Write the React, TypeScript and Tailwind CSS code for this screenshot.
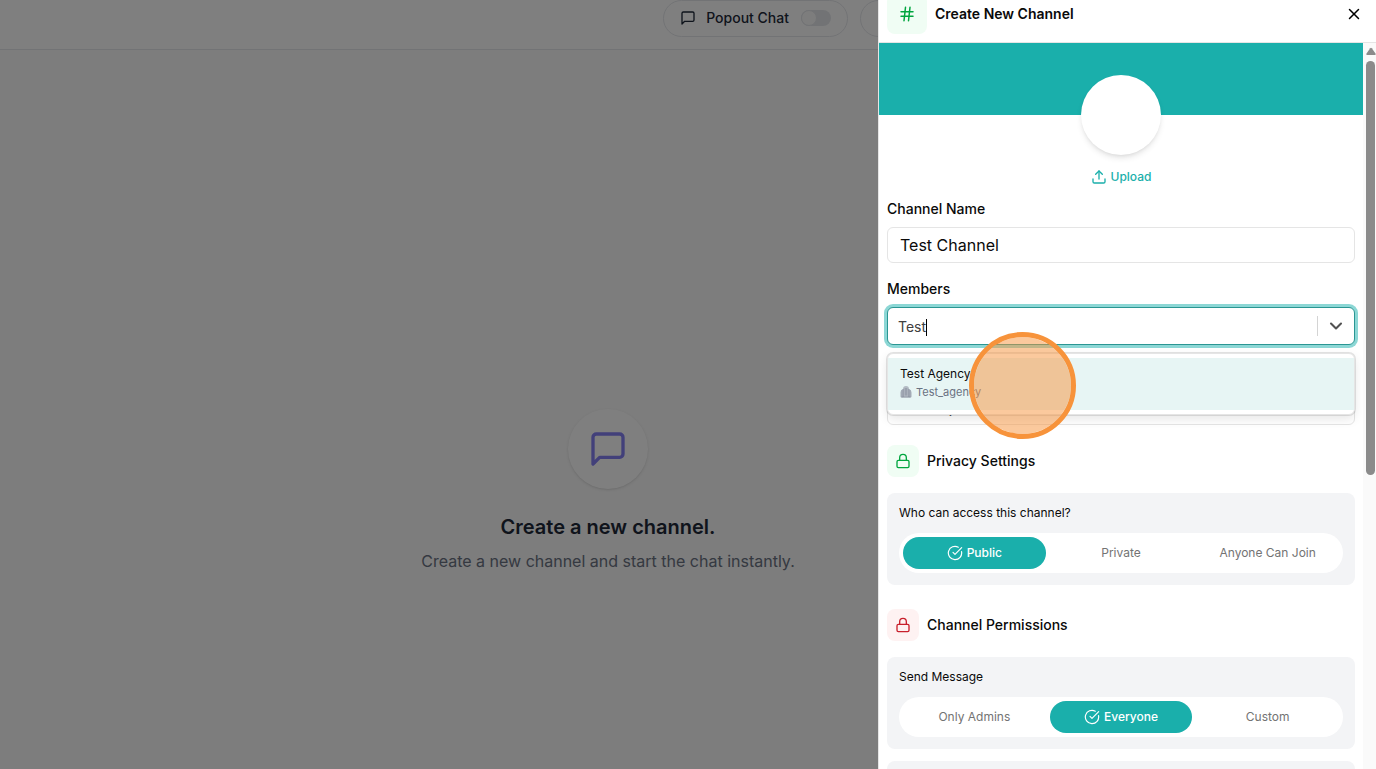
import { useState } from "react";
import type { ReactNode } from "react";
import { ChevronDown, CircleCheckBig, Hash, Lock, Upload, X } from "lucide-react";
import clsx from "clsx";

function ChatIcon({ className }: { className: string }) {
    return (
        <svg viewBox="0 0 24 24" fill="none" stroke="currentColor" strokeWidth="2" strokeLinecap="round" strokeLinejoin="round" className={className} aria-hidden="true">
            <path d="M21 15a2 2 0 0 1-2 2H7l-4 4V5a2 2 0 0 1 2-2h14a2 2 0 0 1 2 2z" />
        </svg>
    );
}

function AgencyIcon() {
    return (
        <svg viewBox="0 0 24 24" className="size-3" aria-hidden="true">
            <path d="M1 13a7 7 0 0 1 5-7v17H3a2 2 0 0 1-2-2z" fill="#a3abb6" />
            <path d="M23 13a7 7 0 0 0-5-7v17h3a2 2 0 0 0 2-2z" fill="#a3abb6" />
            <path d="M6 6a6 6 0 0 1 12 0v17H6z" fill="#b3bac3" />
            <path d="M6.500 6v16M17.500 6v16M10.500 4v15M13.500 4v15M3 22h18" stroke="#858e9b" strokeWidth="1.5" fill="none" />
        </svg>
    );
}

function SectionTitle({ tone, children }: { tone: "green" | "red"; children: ReactNode }) {
    return (
        <div className="flex items-center gap-2">
            <div className={clsx("flex size-8 items-center justify-center rounded-lg", tone === "green" ? "bg-green-50 text-green-600" : "bg-red-50 text-[#c8202c]")}>
                <Lock className="size-4" />
            </div>
            <h3 className="text-sm font-medium text-neutral-950">{children}</h3>
        </div>
    );
}

function OptionCard({ label, options, initial }: { label: string; options: string[]; initial: string }) {
    const [selected, setSelected] = useState(initial);

    return (
        <div className="rounded-lg bg-gray-100 p-3">
            <p className="text-xs text-neutral-950">{label}</p>
            <div role="group" aria-label={label} className="mt-3 grid grid-cols-3 gap-1 rounded-full bg-white p-1">
                {options.map((option) => (
                    <button
                        key={option}
                        type="button"
                        aria-pressed={option === selected}
                        onClick={() => setSelected(option)}
                        className={clsx(
                            "flex h-8 items-center justify-center gap-1 rounded-full text-xs",
                            option === selected ? "bg-[#1aafab] font-medium text-white" : "text-neutral-500",
                        )}
                    >
                        {option === selected && <CircleCheckBig className="size-4" strokeWidth={1.75} />}
                        {option}
                    </button>
                ))}
            </div>
        </div>
    );
}

function ChatPage() {
    return (
        <div className="flex min-h-screen flex-col bg-neutral-50">
            <header className="flex h-[50px] items-start justify-end gap-3 border-b border-gray-200 bg-white pr-44">
                <label className="flex h-[37px] items-center rounded-full border border-gray-200 px-4 pb-0.5 text-sm font-medium text-gray-800">
                    <ChatIcon className="mr-2.5 size-4" />
                    Popout Chat
                    <input type="checkbox" className="peer sr-only" />
                    <span className="ml-3 flex h-4 w-[30px] rounded-full bg-gray-200">
                        <span className="size-4 rounded-full border border-gray-200 bg-neutral-50" />
                    </span>
                </label>
                <div className="h-[37px] w-[340px] rounded-full border border-gray-200" />
            </header>
            <main className="flex flex-1 flex-col items-center justify-center pt-[162px] pr-40 text-center">
                <div className="flex size-20 items-center justify-center rounded-full bg-white shadow-sm">
                    <ChatIcon className="size-10 text-[#8480f4]" />
                </div>
                <h1 className="mt-6 text-xl font-semibold text-gray-800">Create a new channel.</h1>
                <p className="mt-2 text-base text-gray-500">Create a new channel and start the chat instantly.</p>
            </main>
        </div>
    );
}

function MembersSelect() {
    const [query, setQuery] = useState("Test");

    return (
        <div className="relative mt-2">
            <div className="flex h-[38px] items-center rounded-md border border-[#2b9693] bg-white ring-3 ring-[#1aafab]/50">
                <div className="flex min-w-0 flex-1 items-center pt-0.5 pl-2.5">
                    <input
                        id="members"
                        value={query}
                        onChange={(e) => setQuery(e.target.value)}
                        className="field-sizing-content text-sm text-neutral-700 outline-none"
                    />
                    <span className="h-[17px] w-px bg-black" />
                </div>
                <span className="h-5 w-px bg-neutral-300" />
                <button type="button" aria-label="Show members" className="px-2 text-neutral-600">
                    <ChevronDown className="size-5" strokeWidth={2.5} />
                </button>
            </div>
            {/* dropdown menu */}
            <div role="listbox" className="absolute inset-x-0 top-full z-10 mt-2 rounded-md border border-neutral-200 bg-white py-1 shadow-[0_0_0_1px_rgba(0,0,0,0.1),0_4px_11px_rgba(0,0,0,0.1)]">
                <button type="button" role="option" aria-selected="true" className="block w-full bg-[#e7f5f4] px-3 py-2 text-left">
                    <span className="block text-xs text-neutral-950">Test Agency</span>
                    <span className="flex items-center gap-1 text-[11px] leading-5 text-gray-500">
                        <AgencyIcon />
                        Test_agency
                    </span>
                </button>
            </div>
            {/* click marker */}
            <div className="pointer-events-none absolute top-[25px] left-[82px] z-20 size-[107px] rounded-full border-[5px] border-[#f7933b] bg-[#f7933b]/50 bg-clip-padding" />
        </div>
    );
}

function ScrollTrack() {
    return (
        <div className="flex w-[13px] shrink-0 flex-col items-end bg-neutral-50 pt-1" aria-hidden="true">
            <svg viewBox="0 0 10 8" className="h-2 w-2.5">
                <path d="M4.2 1.2a1 1 0 0 1 1.6 0L9.5 6.5a1 1 0 0 1-.8 1.5H1.3a1 1 0 0 1-.8-1.5z" fill="#8b8b8b" />
            </svg>
            <div className="mt-1.5 mr-px h-[414px] w-[9px] rounded-full bg-[#8b8b8b]" />
        </div>
    );
}

function CreateChannelDrawer() {
    return (
        <aside className="fixed inset-y-0 right-0 flex w-full max-w-[498px] flex-col overflow-hidden border-l border-neutral-200 bg-white">
            <header className="flex h-[43px] shrink-0 items-end border-b border-neutral-200 px-2 pb-2">
                <div className="flex h-10 flex-1 items-center gap-2">
                    <div className="flex size-10 items-center justify-center rounded-lg bg-green-50 text-green-600">
                        <Hash className="size-[18px]" />
                    </div>
                    <h2 className="flex-1 text-sm font-semibold text-neutral-950">Create New Channel</h2>
                    <button type="button" aria-label="Close" className="p-[5px] text-black">
                        <X className="size-[18px]" />
                    </button>
                </div>
            </header>

            <div className="flex min-h-0 flex-1">
                <div className="min-w-0 flex-1 overflow-hidden">
                    <div className="h-18 bg-[#1aafab]" />
                    <div className="-mt-10 flex flex-col items-center">
                        <div className="size-20 rounded-full bg-white shadow-md" />
                        <button type="button" className="mt-3 flex items-center gap-1 text-xs leading-5 font-medium text-[#1aafab]">
                            <Upload className="size-4" />
                            Upload
                        </button>
                    </div>

                    <form className="px-2 pt-3" onSubmit={(e) => e.preventDefault()}>
                        <label htmlFor="channel-name" className="block text-sm font-medium text-neutral-950">Channel Name</label>
                        <input
                            id="channel-name"
                            defaultValue="Test Channel"
                            className="mt-2 block h-9 w-full rounded-md border border-neutral-200 px-3 text-base text-neutral-950 outline-none"
                        />

                        <label htmlFor="members" className="mt-4 block text-sm font-medium text-neutral-950">Members</label>
                        <MembersSelect />

                        <input
                            aria-label="Description"
                            placeholder="Description"
                            className="mt-11 block h-9 w-full rounded-md border border-neutral-200 px-3 text-base outline-none placeholder:text-neutral-600"
                        />

                        <div className="mt-5">
                            <SectionTitle tone="green">Privacy Settings</SectionTitle>
                            <div className="mt-4">
                                <OptionCard label="Who can access this channel?" options={["Public", "Private", "Anyone Can Join"]} initial="Public" />
                            </div>
                        </div>

                        <div className="mt-6">
                            <SectionTitle tone="red">Channel Permissions</SectionTitle>
                            <div className="mt-4 flex flex-col gap-3">
                                <OptionCard label="Send Message" options={["Only Admins", "Everyone", "Custom"]} initial="Everyone" />
                                <div className="h-23 rounded-lg bg-gray-100" />
                            </div>
                        </div>
                    </form>
                </div>
                <ScrollTrack />
            </div>
        </aside>
    );
}

export default function App() {
    return (
        <div className="h-screen overflow-hidden font-['Inter',sans-serif]">
            <ChatPage />
            <div className="fixed inset-0 bg-black/50" />
            <CreateChannelDrawer />
        </div>
    );
}
